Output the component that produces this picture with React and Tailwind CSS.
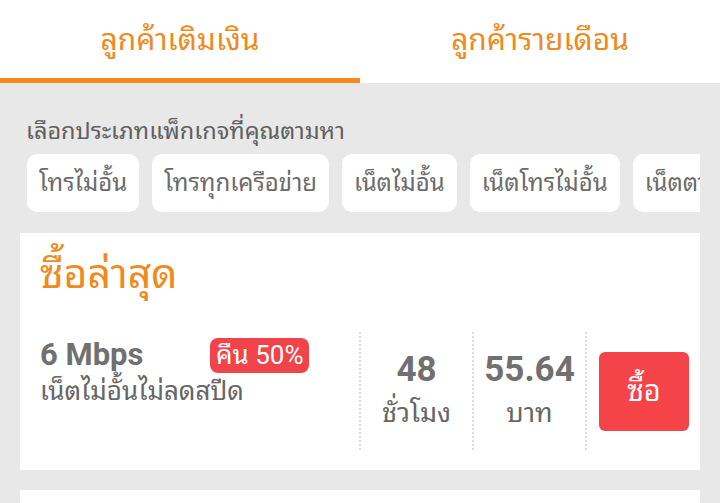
import { useState } from 'react'

const chips = ['โทรไม่อั้น', 'โทรทุกเครือข่าย', 'เน็ตไม่อั้น', 'เน็ตโทรไม่อั้น', 'เน็ตตามการใช้งาน']

export default function App() {
  const [tab, setTab] = useState(0)

  return (
    <div className="h-[503px] w-[720px] overflow-hidden bg-[#e8e8e8] font-['Roboto','Noto_Sans_Thai_Looped','Noto_Sans_Thai',sans-serif]">
      <div className="flex h-[83px] bg-white">
        {['ลูกค้าเติมเงิน', 'ลูกค้ารายเดือน'].map((label, i) => (
          <button
            key={label}
            type="button"
            onClick={() => setTab(i)}
            className={`flex flex-1 items-center justify-center border-b-[5px] text-[30px] text-[#f08a1c] ${tab === i ? 'border-[#f5891b]' : 'border-transparent'}`}
          >
            {label}
          </button>
        ))}
      </div>

      <div className="pl-[26px] pt-[33px] text-[23.5px] leading-[30px] text-[#5f5f5f]">เลือกประเภทแพ็กเกจที่คุณตามหา</div>

      <div className="mr-[20px] mt-[8px] flex gap-[13px] overflow-hidden pl-[27px]">
        {chips.map((chip) => (
          <div key={chip} className="flex h-[58px] shrink-0 items-center rounded-[10px] bg-white px-[12px] text-[24px] text-[#6b6b6b]">
            {chip}
          </div>
        ))}
      </div>

      <div className="mx-[20px] mt-[21px] h-[237px] bg-white px-[20px] pt-[16px]">
        <div className="text-[41px] leading-[50px] text-[#f08a1c]">ซื้อล่าสุด</div>
        <div className="mt-[33px] flex h-[118px]">
          <div className="w-[319px] shrink-0 pt-[4px]">
            <div className="flex items-center">
              <span className="w-[170px] text-[31px] font-bold leading-[38px] text-[#707070]">6 Mbps</span>
              <span className="rounded-[8px] bg-[#f0434a] px-[6px] text-[26px] leading-[35px] text-white">คืน 50%</span>
            </div>
            <div className="text-[26px] leading-[34px] text-[#666]">เน็ตไม่อั้นไม่ลดสปีด</div>
          </div>
          <div className="flex w-[113px] shrink-0 flex-col items-center border-l-2 border-dotted border-[#ddd] pt-[16px]">
            <span className="text-[35px] font-bold leading-[44px] text-[#707070]">48</span>
            <span className="text-[27px] leading-[42px] text-[#666]">ชั่วโมง</span>
          </div>
          <div className="flex w-[113px] shrink-0 flex-col items-center border-l-2 border-dotted border-[#ddd] pt-[16px]">
            <span className="text-[35px] font-bold leading-[44px] text-[#707070]">55.64</span>
            <span className="text-[27px] leading-[42px] text-[#666]">บาท</span>
          </div>
          <div className="flex flex-1 items-start border-l-2 border-dotted border-[#ddd] pl-[12px] pt-[20px]">
            <button type="button" className="flex h-[79px] w-[90px] items-center justify-center rounded-[6px] bg-[#f5434a] text-[29px] text-white">
              ซื้อ
            </button>
          </div>
        </div>
      </div>

      <div className="mx-[20px] mt-[20px] h-[40px] bg-white" />
    </div>
  )
}
